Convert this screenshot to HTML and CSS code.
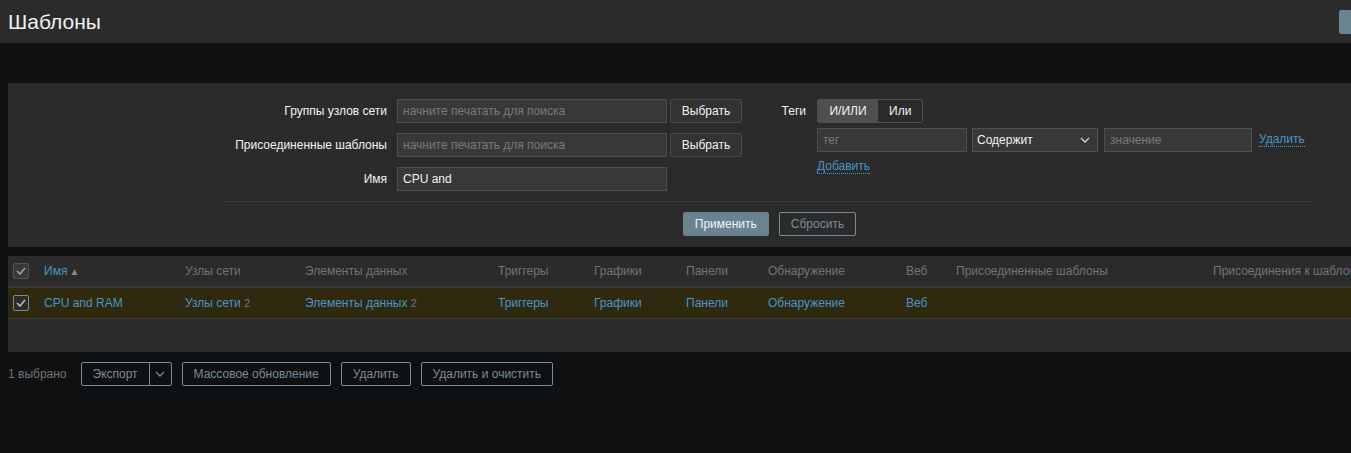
FILE: index.html
```html
<!DOCTYPE html>
<html lang="ru">
<head>
<meta charset="utf-8">
<title>Шаблоны</title>
<link rel="stylesheet" href="styles.css">
</head>
<body>
<div class="page">
  <header class="header">
    <h1 class="title">Шаблоны</h1>
    <div class="header-actions">
      <button class="btn-primary hdr-btn">Создать шаблон</button>
      <button class="btn-primary hdr-btn">Импорт</button>
    </div>
  </header>

  <section class="filter">
    <div class="filter-cols">
      <div class="fcol-left">
        <div class="frow">
          <label class="flabel">Группы узлов сети</label>
          <input class="inp wide" placeholder="начните печатать для поиска">
          <button class="btn-alt">Выбрать</button>
        </div>
        <div class="frow">
          <label class="flabel">Присоединенные шаблоны</label>
          <input class="inp wide" placeholder="начните печатать для поиска">
          <button class="btn-alt">Выбрать</button>
        </div>
        <div class="frow">
          <label class="flabel">Имя</label>
          <input class="inp wide" value="CPU and">
        </div>
      </div>
      <div class="fcol-right">
        <div class="frow">
          <label class="flabel tags-label">Теги</label>
          <div class="radio">
            <span class="seg on">И/ИЛИ</span><span class="seg">Или</span>
          </div>
        </div>
        <div class="tag-row">
          <input class="inp tag" placeholder="тег">
          <div class="select">Содержит
            <svg class="chev" width="10" height="6" viewBox="0 0 10 6"><path d="M1 1l4 4 4-4" fill="none" stroke="#d0d0d0" stroke-width="1.3"/></svg>
          </div>
          <input class="inp val" placeholder="значение">
          <a class="dlink" href="#">Удалить</a>
        </div>
        <div class="add-row"><a class="dlink" href="#">Добавить</a></div>
      </div>
    </div>
    <div class="filter-sep"></div>
    <div class="filter-btns">
      <button class="btn-primary">Применить</button>
      <button class="btn-outline">Сбросить</button>
    </div>
  </section>

  <section class="list">
    <table class="tbl">
      <colgroup>
        <col style="width:31px"><col style="width:141px"><col style="width:120px"><col style="width:193px"><col style="width:96px"><col style="width:92px"><col style="width:82px"><col style="width:138px"><col style="width:50px"><col style="width:257px"><col style="width:250px">
      </colgroup>
      <thead>
        <tr>
          <th class="cbcell"><span class="cb"><svg width="10" height="8" viewBox="0 0 10 8"><path d="M1 4l3 3 5-6" fill="none" stroke="#9aa3aa" stroke-width="1.6"/></svg></span></th>
          <th><a class="link" href="#">Имя</a><span class="sort">▲</span></th>
          <th>Узлы сети</th>
          <th>Элементы данных</th>
          <th>Триггеры</th>
          <th>Графики</th>
          <th>Панели</th>
          <th>Обнаружение</th>
          <th>Веб</th>
          <th>Присоединенные шаблоны</th>
          <th>Присоединения к шаблонам</th>
        </tr>
      </thead>
      <tbody>
        <tr class="sel">
          <td class="cbcell"><span class="cb cb-row"><svg width="10" height="8" viewBox="0 0 10 8"><path d="M1 4l3 3 5-6" fill="none" stroke="#b4bcc2" stroke-width="1.6"/></svg></span></td>
          <td><a class="link" href="#">CPU and RAM</a></td>
          <td><a class="link" href="#">Узлы сети</a> <span class="cnt">2</span></td>
          <td><a class="link" href="#">Элементы данных</a> <span class="cnt">2</span></td>
          <td><a class="link" href="#">Триггеры</a></td>
          <td><a class="link" href="#">Графики</a></td>
          <td><a class="link" href="#">Панели</a></td>
          <td><a class="link" href="#">Обнаружение</a></td>
          <td><a class="link" href="#">Веб</a></td>
          <td></td>
          <td></td>
        </tr>
      </tbody>
    </table>
    <div class="list-foot"></div>
  </section>

  <div class="actions">
    <span class="selcount">1 выбрано</span>
    <div class="split">
      <button class="btn-outline split-main">Экспорт</button><button class="btn-outline split-arrow"><svg width="10" height="6" viewBox="0 0 10 6"><path d="M1 1l4 4 4-4" fill="none" stroke="#768d99" stroke-width="1.3"/></svg></button>
    </div>
    <button class="btn-outline">Массовое обновление</button>
    <button class="btn-outline">Удалить</button>
    <button class="btn-outline">Удалить и очистить</button>
  </div>
</div>
</body>
</html>
```
FILE: styles.css
```css
html, body {
  margin: 0;
  padding: 0;
  background: #0e1012;
  overflow: hidden;
}
body {
  font-family: "Liberation Sans", Arial, sans-serif;
  font-size: 12px;
  color: #f2f2f2;
}
.page {
  width: 1700px;
}
button, input {
  font-family: inherit;
  font-size: 12px;
}
.header {
  height: 43px;
  background: #2b2b2b;
  display: flex;
  align-items: center;
  padding-left: 8px;
}
.title {
  margin: 0;
  font-size: 21px;
  font-weight: normal;
  color: #f2f2f2;
  width: 1331px;
  flex: none;
}
.header-actions {
  display: flex;
  gap: 10px;
}
.hdr-btn {
  height: 24px;
}
.btn-primary {
  background: #6a8391;
  color: #f2f2f2;
  border: 1px solid #6a8391;
  border-radius: 2px;
  height: 24px;
  padding: 0 11px;
}
.btn-alt {
  background: #333333;
  color: #f2f2f2;
  border: 1px solid #4a4a4a;
  border-radius: 2px;
  height: 24px;
  width: 72px;
  padding: 0;
}
.btn-outline {
  background: transparent;
  color: #768d99;
  border: 1px solid #768d99;
  border-radius: 2px;
  height: 24px;
  padding: 0 11px;
}

/* filter */
.filter {
  margin: 40px 0 0 8px;
  background: #2b2b2b;
  width: 1520px;
  padding: 16px 0 11px 216px;
  box-sizing: border-box;
}
.filter-cols {
  display: flex;
}
.fcol-left {
  display: flex;
  flex-direction: column;
  gap: 10px;
  width: 536px;
  flex: none;
}
.frow {
  display: flex;
  align-items: center;
  height: 24px;
}
.flabel {
  width: 173px;
  text-align: right;
  padding-right: 10px;
  box-sizing: border-box;
  flex: none;
}
.inp {
  height: 24px;
  box-sizing: border-box;
  background: #383838;
  border: 1px solid #4f4f4f;
  color: #f2f2f2;
  padding: 0 5px;
  outline: none;
}
.inp::placeholder {
  color: #7a7a7a;
}
.wide {
  width: 270px;
  margin-right: 3px;
}
.fcol-right {
  display: flex;
  flex-direction: column;
  margin-left: 10px;
}
.tags-label {
  width: 47px;
  padding-right: 11px;
}
.radio {
  display: flex;
  border: 1px solid #4f4f4f;
  border-radius: 2px;
  height: 24px;
  box-sizing: border-box;
}
.seg {
  display: flex;
  align-items: center;
  padding: 0 11px;
  color: #f2f2f2;
}
.seg.on {
  background: #4f4f4f;
  width: 60px;
  box-sizing: border-box;
  justify-content: center;
}
.tag-row {
  display: flex;
  align-items: center;
  margin: 5px 0 0 47px;
  gap: 6px;
}
.tag { width: 150px; margin-right: -1px; }
.val { width: 148px; }
.select {
  width: 126px;
  height: 24px;
  box-sizing: border-box;
  background: #383838;
  border: 1px solid #4f4f4f;
  display: flex;
  align-items: center;
  justify-content: space-between;
  padding: 0 7px 0 4px;
  font-size: 12px;
}
.dlink {
  color: #4796c4;
  text-decoration: none;
  border-bottom: 1px dotted #4796c4;
  line-height: 13px;
}
.tag-row .dlink { margin-left: 1px; }
.add-row {
  margin: 7px 0 0 47px;
}
.filter-sep {
  width: 1088px;
  border-top: 1px solid #383838;
  margin-top: 10px;
}
.filter-btns {
  width: 1088px;
  display: flex;
  justify-content: center;
  gap: 10px;
  margin-top: 10px;
  padding-left: 3px;
  box-sizing: border-box;
}

/* list */
.list {
  margin: 9px 0 0 8px;
  width: 1520px;
  background: #2b2b2b;
}
.tbl {
  border-collapse: collapse;
  table-layout: fixed;
  width: 1450px;
}
.tbl th {
  text-align: left;
  font-weight: normal;
  color: #737373;
  height: 30px;
  padding: 0 5px;
  border-bottom: 2px solid #383838;
  white-space: nowrap;
  overflow: hidden;
}
.tbl td {
  height: 30px;
  padding: 0 5px;
  border-bottom: 1px solid #383838;
  white-space: nowrap;
}
.tbl .cbcell {
  padding: 0 0 0 5px;
}
.sel td {
  background: #2f2910;
}
.cb {
  display: inline-flex;
  width: 16px;
  height: 16px;
  box-sizing: border-box;
  border: 1px solid #555;
  background: #383838;
  align-items: center;
  justify-content: center;
  vertical-align: middle;
  border-radius: 2px;
}
.cb-row {
  border-color: #768d99;
  background: #2b2b2b;
}
.link {
  color: #4796c4;
  text-decoration: none;
}
.sort {
  color: #8a8a8a;
  font-size: 10px;
  margin-left: 2px;
}
.cnt {
  color: #737373;
  font-size: 11px;
}
.list-foot {
  height: 33px;
}

/* actions */
.actions {
  display: flex;
  align-items: center;
  margin: 10px 0 0 8px;
  gap: 10px;
}
.selcount {
  color: #737373;
  margin-right: 4px;
}
.split {
  display: flex;
}
.split-main {
  border-radius: 2px 0 0 2px;
  width: 69px;
}
.split-arrow {
  border-radius: 0 2px 2px 0;
  width: 23px;
  padding: 0;
  display: flex;
  align-items: center;
  justify-content: center;
  border-left: 1px solid #768d99;
  margin-left: -1px;
}
```
